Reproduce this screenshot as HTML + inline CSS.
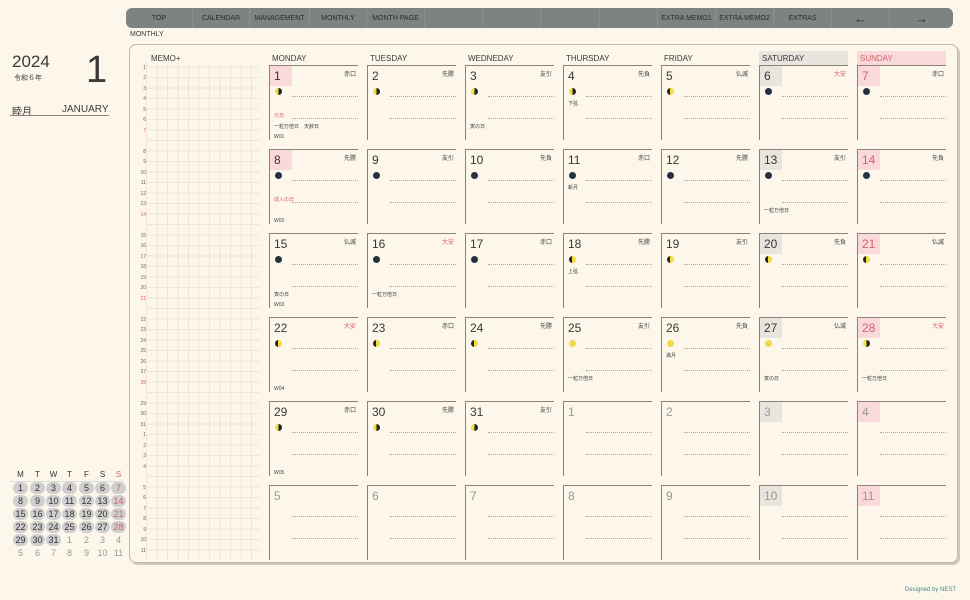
<!DOCTYPE html>
<html><head><meta charset="utf-8"><style>
*{margin:0;padding:0;box-sizing:border-box}
body{width:970px;height:600px;background:#fdf6ea;font-family:"Liberation Sans","Noto Sans CJK JP",sans-serif;color:#3c3a38;position:relative;overflow:hidden}
.a{position:absolute}
.nav{left:126px;top:8px;width:827px;height:20px;background:#7d8381;border-radius:6px;overflow:hidden}
.nav div{position:absolute;top:0;height:20px;line-height:20px;font-size:7px;color:#2a2c2c;text-align:center;border-right:1px solid #8a908e;padding-top:1px}
.panel{left:129px;top:44px;width:829px;height:519px;border:1.5px solid #c5b9a6;border-radius:7px;box-shadow:2px 2px 0 #d3c8b6}
.grid{left:146px;top:63px;width:114px;height:497px;background:
repeating-linear-gradient(90deg,#efe6d8 0 1px,transparent 1px 10.5px),
repeating-linear-gradient(0deg,transparent 0 9.5px,#f0e7da 9.5px 10.5px)}
.dh{font-size:8px;color:#3a3836;top:54px}
.c{position:absolute;width:89px;height:75px;border-top:1px solid #8b8177;border-left:1.5px solid #8b8177}
.c .n{position:absolute;left:0;top:0;width:22px;height:20px;font-size:12px;padding:3px 0 0 4px;color:#3a3836}
.c .r{position:absolute;right:2px;top:3px;font-size:6px;color:#444}
.c .m{position:absolute;left:5px;top:22px;width:7px;height:7px;border-radius:50%}
.c .l{position:absolute;left:22px;right:0;border-top:1px dotted #aaa}
.c .t{position:absolute;left:4px;font-size:5px;color:#444;white-space:nowrap}
.pk{background:#f9d9da}.gy{background:#e9e4de}
.red{color:#d7606a!important}
.g .n{color:#999}
.y{background:linear-gradient(90deg,#222 0 45%,#f1dc3c 45%)}
.h{background:linear-gradient(90deg,#f1dc3c 0 50%,#222 50%)}
.dk{background:#263043}
.fm{background:#f1d94a}
.hr{position:absolute;left:140px;font-size:5px;color:#666;width:6px;text-align:right}
.mc{position:absolute;width:15px;height:12px;font-size:9px;text-align:center;line-height:12px;color:#333}
.mc.b{background:#cfcfd0;border-radius:6px}
</style></head><body>
<div class="a nav">
<div style="left:0;width:67px">TOP</div><div style="left:67px;width:57px">CALENDAR</div><div style="left:124px;width:60px">MANAGEMENT</div><div style="left:184px;width:57px">MONTHLY</div><div style="left:241px;width:58px">MONTH PAGE</div><div style="left:299px;width:58px"></div><div style="left:357px;width:58px"></div><div style="left:415px;width:59px"></div><div style="left:474px;width:58px"></div><div style="left:532px;width:58px">EXTRA MEMO1</div><div style="left:590px;width:58px">EXTRA MEMO2</div><div style="left:648px;width:58px">EXTRAS</div><div style="left:706px;width:58px;font-size:13px">←</div><div style="left:764px;width:63px;font-size:13px;border:0">→</div>
</div>
<div class="a" style="left:130px;top:31px;font-size:7px">MONTHLY</div>
<div class="a" style="left:12px;top:52px;font-size:17px">2024</div>
<div class="a" style="left:14px;top:73px;font-size:7px">令和６年</div>
<div class="a" style="left:86px;top:50px;font-size:38px;line-height:40px">1</div>
<div class="a" style="left:12px;top:103px;font-size:10px">睦月</div>
<div class="a" style="left:62px;top:104px;font-size:10px">JANUARY</div>
<div class="a" style="left:10px;top:115px;width:99px;border-top:1px solid #8b8177"></div>
<div class="a panel"></div>
<div class="a grid"></div>
<div class="a" style="left:151px;top:54px;font-size:8px">MEMO+</div>
<div class="a dh" style="left:272px">MONDAY</div><div class="a dh" style="left:370px">TUESDAY</div><div class="a dh" style="left:468px">WEDNEDAY</div><div class="a dh" style="left:566px">THURSDAY</div><div class="a dh" style="left:664px">FRIDAY</div>
<div class="a dh gy" style="left:759px;top:51px;width:89px;height:14px;padding:3px 0 0 3px">SATURDAY</div>
<div class="a dh pk red" style="left:857px;top:51px;width:89px;height:14px;padding:3px 0 0 3px">SUNDAY</div>

<div class="hr" style="top:65px">1</div><div class="hr" style="top:75px">2</div><div class="hr" style="top:86px">3</div><div class="hr" style="top:96px">4</div><div class="hr" style="top:107px">5</div><div class="hr" style="top:117px">6</div><div class="hr red" style="top:128px">7</div>
<div class="hr" style="top:149px">8</div><div class="hr" style="top:159px">9</div><div class="hr" style="top:170px">10</div><div class="hr" style="top:180px">11</div><div class="hr" style="top:191px">12</div><div class="hr" style="top:201px">13</div><div class="hr red" style="top:212px">14</div>
<div class="hr" style="top:233px">15</div><div class="hr" style="top:243px">16</div><div class="hr" style="top:254px">17</div><div class="hr" style="top:264px">18</div><div class="hr" style="top:275px">19</div><div class="hr" style="top:285px">20</div><div class="hr red" style="top:296px">21</div>
<div class="hr" style="top:317px">22</div><div class="hr" style="top:327px">23</div><div class="hr" style="top:338px">24</div><div class="hr" style="top:348px">25</div><div class="hr" style="top:359px">26</div><div class="hr" style="top:369px">27</div><div class="hr red" style="top:380px">28</div>
<div class="hr" style="top:401px">29</div><div class="hr" style="top:411px">30</div><div class="hr" style="top:422px">31</div><div class="hr" style="top:432px">1</div><div class="hr" style="top:443px">2</div><div class="hr" style="top:453px">3</div><div class="hr" style="top:464px">4</div>
<div class="hr" style="top:485px">5</div><div class="hr" style="top:495px">6</div><div class="hr" style="top:506px">7</div><div class="hr" style="top:516px">8</div><div class="hr" style="top:527px">9</div><div class="hr" style="top:537px">10</div><div class="hr" style="top:548px">11</div>

<div class="c" style="left:269px;top:65px"><div class="n pk">1</div><div class="r">赤口</div><div class="m h"></div><div class="l" style="top:30px"></div><div class="l" style="top:52px"></div><div class="t red" style="top:46px">元日</div><div class="t" style="top:57px">一粒万倍日　天赦日</div><div class="t" style="top:68px">W01</div></div>
<div class="c" style="left:367px;top:65px"><div class="n">2</div><div class="r">先勝</div><div class="m h"></div><div class="l" style="top:30px"></div><div class="l" style="top:52px"></div></div>
<div class="c" style="left:465px;top:65px"><div class="n">3</div><div class="r">友引</div><div class="m h"></div><div class="l" style="top:30px"></div><div class="l" style="top:52px"></div><div class="t" style="top:57px">寅の日</div></div>
<div class="c" style="left:563px;top:65px"><div class="n">4</div><div class="r">先負</div><div class="m h"></div><div class="l" style="top:30px"></div><div class="l" style="top:52px"></div><div class="t" style="top:34px">下弦</div></div>
<div class="c" style="left:661px;top:65px"><div class="n">5</div><div class="r">仏滅</div><div class="m y"></div><div class="l" style="top:30px"></div><div class="l" style="top:52px"></div></div>
<div class="c" style="left:759px;top:65px"><div class="n gy">6</div><div class="r red">大安</div><div class="m dk"></div><div class="l" style="top:30px"></div><div class="l" style="top:52px"></div></div>
<div class="c" style="left:857px;top:65px"><div class="n pk red">7</div><div class="r">赤口</div><div class="m dk"></div><div class="l" style="top:30px"></div><div class="l" style="top:52px"></div></div>
<div class="c" style="left:269px;top:149px"><div class="n pk">8</div><div class="r">先勝</div><div class="m dk"></div><div class="l" style="top:30px"></div><div class="l" style="top:52px"></div><div class="t red" style="top:46px">成人の日</div><div class="t" style="top:68px">W02</div></div>
<div class="c" style="left:367px;top:149px"><div class="n">9</div><div class="r">友引</div><div class="m dk"></div><div class="l" style="top:30px"></div><div class="l" style="top:52px"></div></div>
<div class="c" style="left:465px;top:149px"><div class="n">10</div><div class="r">先負</div><div class="m dk"></div><div class="l" style="top:30px"></div><div class="l" style="top:52px"></div></div>
<div class="c" style="left:563px;top:149px"><div class="n">11</div><div class="r">赤口</div><div class="m dk"></div><div class="l" style="top:30px"></div><div class="l" style="top:52px"></div><div class="t" style="top:34px">新月</div></div>
<div class="c" style="left:661px;top:149px"><div class="n">12</div><div class="r">先勝</div><div class="m dk"></div><div class="l" style="top:30px"></div><div class="l" style="top:52px"></div></div>
<div class="c" style="left:759px;top:149px"><div class="n gy">13</div><div class="r">友引</div><div class="m dk"></div><div class="l" style="top:30px"></div><div class="l" style="top:52px"></div><div class="t" style="top:57px">一粒万倍日</div></div>
<div class="c" style="left:857px;top:149px"><div class="n pk red">14</div><div class="r">先負</div><div class="m dk"></div><div class="l" style="top:30px"></div><div class="l" style="top:52px"></div></div>
<div class="c" style="left:269px;top:233px"><div class="n">15</div><div class="r">仏滅</div><div class="m dk"></div><div class="l" style="top:30px"></div><div class="l" style="top:52px"></div><div class="t" style="top:57px">寅の日</div><div class="t" style="top:68px">W03</div></div>
<div class="c" style="left:367px;top:233px"><div class="n">16</div><div class="r red">大安</div><div class="m dk"></div><div class="l" style="top:30px"></div><div class="l" style="top:52px"></div><div class="t" style="top:57px">一粒万倍日</div></div>
<div class="c" style="left:465px;top:233px"><div class="n">17</div><div class="r">赤口</div><div class="m dk"></div><div class="l" style="top:30px"></div><div class="l" style="top:52px"></div></div>
<div class="c" style="left:563px;top:233px"><div class="n">18</div><div class="r">先勝</div><div class="m y"></div><div class="l" style="top:30px"></div><div class="l" style="top:52px"></div><div class="t" style="top:34px">上弦</div></div>
<div class="c" style="left:661px;top:233px"><div class="n">19</div><div class="r">友引</div><div class="m y"></div><div class="l" style="top:30px"></div><div class="l" style="top:52px"></div></div>
<div class="c" style="left:759px;top:233px"><div class="n gy">20</div><div class="r">先負</div><div class="m y"></div><div class="l" style="top:30px"></div><div class="l" style="top:52px"></div></div>
<div class="c" style="left:857px;top:233px"><div class="n pk red">21</div><div class="r">仏滅</div><div class="m y"></div><div class="l" style="top:30px"></div><div class="l" style="top:52px"></div></div>
<div class="c" style="left:269px;top:317px"><div class="n">22</div><div class="r red">大安</div><div class="m y"></div><div class="l" style="top:30px"></div><div class="l" style="top:52px"></div><div class="t" style="top:68px">W04</div></div>
<div class="c" style="left:367px;top:317px"><div class="n">23</div><div class="r">赤口</div><div class="m y"></div><div class="l" style="top:30px"></div><div class="l" style="top:52px"></div></div>
<div class="c" style="left:465px;top:317px"><div class="n">24</div><div class="r">先勝</div><div class="m y"></div><div class="l" style="top:30px"></div><div class="l" style="top:52px"></div></div>
<div class="c" style="left:563px;top:317px"><div class="n">25</div><div class="r">友引</div><div class="m fm"></div><div class="l" style="top:30px"></div><div class="l" style="top:52px"></div><div class="t" style="top:57px">一粒万倍日</div></div>
<div class="c" style="left:661px;top:317px"><div class="n">26</div><div class="r">先負</div><div class="m fm"></div><div class="l" style="top:30px"></div><div class="l" style="top:52px"></div><div class="t" style="top:34px">満月</div></div>
<div class="c" style="left:759px;top:317px"><div class="n gy">27</div><div class="r">仏滅</div><div class="m fm"></div><div class="l" style="top:30px"></div><div class="l" style="top:52px"></div><div class="t" style="top:57px">寅の日</div></div>
<div class="c" style="left:857px;top:317px"><div class="n pk red">28</div><div class="r red">大安</div><div class="m h"></div><div class="l" style="top:30px"></div><div class="l" style="top:52px"></div><div class="t" style="top:57px">一粒万倍日</div></div>
<div class="c" style="left:269px;top:401px"><div class="n">29</div><div class="r">赤口</div><div class="m h"></div><div class="l" style="top:30px"></div><div class="l" style="top:52px"></div><div class="t" style="top:68px">W05</div></div>
<div class="c" style="left:367px;top:401px"><div class="n">30</div><div class="r">先勝</div><div class="m h"></div><div class="l" style="top:30px"></div><div class="l" style="top:52px"></div></div>
<div class="c" style="left:465px;top:401px"><div class="n">31</div><div class="r">友引</div><div class="m h"></div><div class="l" style="top:30px"></div><div class="l" style="top:52px"></div></div>
<div class="c g" style="left:563px;top:401px"><div class="n">1</div><div class="l" style="top:30px"></div><div class="l" style="top:52px"></div></div>
<div class="c g" style="left:661px;top:401px"><div class="n">2</div><div class="l" style="top:30px"></div><div class="l" style="top:52px"></div></div>
<div class="c g" style="left:759px;top:401px"><div class="n gy">3</div><div class="l" style="top:30px"></div><div class="l" style="top:52px"></div></div>
<div class="c g" style="left:857px;top:401px"><div class="n pk">4</div><div class="l" style="top:30px"></div><div class="l" style="top:52px"></div></div>
<div class="c g" style="left:269px;top:485px"><div class="n">5</div><div class="l" style="top:30px"></div><div class="l" style="top:52px"></div></div>
<div class="c g" style="left:367px;top:485px"><div class="n">6</div><div class="l" style="top:30px"></div><div class="l" style="top:52px"></div></div>
<div class="c g" style="left:465px;top:485px"><div class="n">7</div><div class="l" style="top:30px"></div><div class="l" style="top:52px"></div></div>
<div class="c g" style="left:563px;top:485px"><div class="n">8</div><div class="l" style="top:30px"></div><div class="l" style="top:52px"></div></div>
<div class="c g" style="left:661px;top:485px"><div class="n">9</div><div class="l" style="top:30px"></div><div class="l" style="top:52px"></div></div>
<div class="c g" style="left:759px;top:485px"><div class="n gy">10</div><div class="l" style="top:30px"></div><div class="l" style="top:52px"></div></div>
<div class="c g" style="left:857px;top:485px"><div class="n pk">11</div><div class="l" style="top:30px"></div><div class="l" style="top:52px"></div></div>

<div class="a" style="left:10px;top:481px;width:113px;border-top:1px solid #ddd"></div>
<div class="mc" style="left:13px;top:469px;font-size:8px">M</div><div class="mc" style="left:30px;top:469px;font-size:8px">T</div><div class="mc" style="left:46px;top:469px;font-size:8px">W</div><div class="mc" style="left:62px;top:469px;font-size:8px">T</div><div class="mc" style="left:79px;top:469px;font-size:8px">F</div><div class="mc" style="left:95px;top:469px;font-size:8px">S</div><div class="mc red" style="left:111px;top:469px;font-size:8px">S</div>
<div class="mc b" style="left:13px;top:482px">1</div><div class="mc b" style="left:30px;top:482px">2</div><div class="mc b" style="left:46px;top:482px">3</div><div class="mc b" style="left:62px;top:482px">4</div><div class="mc b" style="left:79px;top:482px">5</div><div class="mc b" style="left:95px;top:482px">6</div><div class="mc b red" style="left:111px;top:482px">7</div>
<div class="mc b" style="left:13px;top:495px">8</div><div class="mc b" style="left:30px;top:495px">9</div><div class="mc b" style="left:46px;top:495px">10</div><div class="mc b" style="left:62px;top:495px">11</div><div class="mc b" style="left:79px;top:495px">12</div><div class="mc b" style="left:95px;top:495px">13</div><div class="mc b red" style="left:111px;top:495px">14</div>
<div class="mc b" style="left:13px;top:508px">15</div><div class="mc b" style="left:30px;top:508px">16</div><div class="mc b" style="left:46px;top:508px">17</div><div class="mc b" style="left:62px;top:508px">18</div><div class="mc b" style="left:79px;top:508px">19</div><div class="mc b" style="left:95px;top:508px">20</div><div class="mc b red" style="left:111px;top:508px">21</div>
<div class="mc b" style="left:13px;top:521px">22</div><div class="mc b" style="left:30px;top:521px">23</div><div class="mc b" style="left:46px;top:521px">24</div><div class="mc b" style="left:62px;top:521px">25</div><div class="mc b" style="left:79px;top:521px">26</div><div class="mc b" style="left:95px;top:521px">27</div><div class="mc b red" style="left:111px;top:521px">28</div>
<div class="mc b" style="left:13px;top:534px">29</div><div class="mc b" style="left:30px;top:534px">30</div><div class="mc b" style="left:46px;top:534px">31</div><div class="mc" style="left:62px;top:534px;color:#999">1</div><div class="mc" style="left:79px;top:534px;color:#999">2</div><div class="mc" style="left:95px;top:534px;color:#999">3</div><div class="mc" style="left:111px;top:534px;color:#999">4</div>
<div class="mc" style="left:13px;top:547px;color:#999">5</div><div class="mc" style="left:30px;top:547px;color:#999">6</div><div class="mc" style="left:46px;top:547px;color:#999">7</div><div class="mc" style="left:62px;top:547px;color:#999">8</div><div class="mc" style="left:79px;top:547px;color:#999">9</div><div class="mc" style="left:95px;top:547px;color:#999">10</div><div class="mc" style="left:111px;top:547px;color:#999">11</div>

<div class="a" style="left:905px;top:587px;font-size:6px;color:#4f8a8a">Designed by NEST</div>
</body></html>
